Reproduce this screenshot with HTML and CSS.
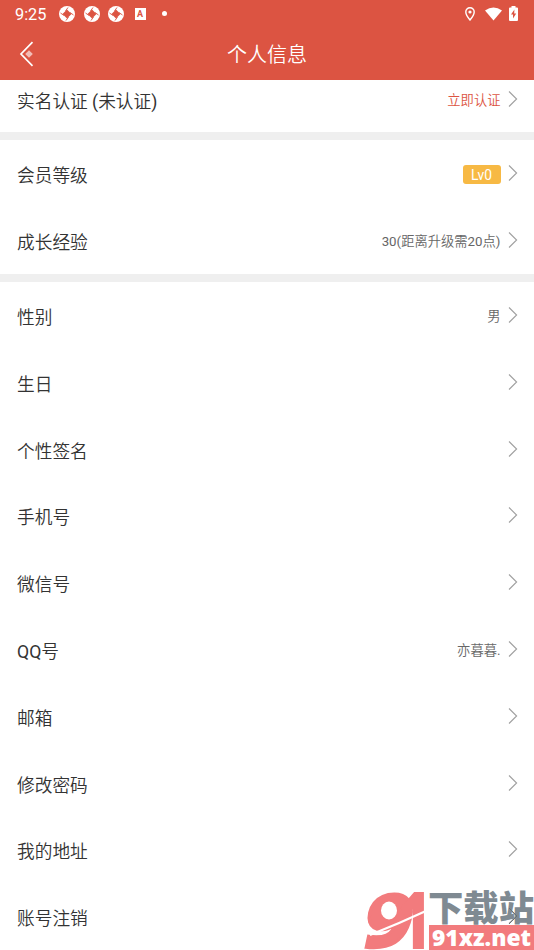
FILE: index.html
```html
<!DOCTYPE html>
<html lang="zh-CN">
<head>
<meta charset="utf-8">
<title>个人信息</title>
<link rel="stylesheet" href="styles.css">
</head>
<body>
<svg class="defs" width="0" height="0" aria-hidden="true">
  <symbol id="chevron" viewBox="0 0 10 18"><path d="M1 1.5L8.6 9L1 16.5" fill="none" stroke="currentColor" stroke-width="1.1"/></symbol>
  <symbol id="shutter" viewBox="0 0 16 16"><circle cx="8" cy="8" r="8" fill="#fff"/><path d="M8 3.500L12.500 8L8 12.500L3.500 8Z" fill="#dc5442"/><path d="M6.500 5L9 1.500M11 6.500L14.500 9M9.500 11L7 14.500M5 9.500L1.500 7" stroke="#dc5442" stroke-width=".9"/></symbol>
</svg>
<header class="header">
  <div class="status">
    <span class="time">9:25</span>
    <svg class="app"><use href="#shutter"/></svg>
    <svg class="app"><use href="#shutter"/></svg>
    <svg class="app"><use href="#shutter"/></svg>
    <span class="letter">A</span>
    <span class="dot"></span>
    <span class="spacer"></span>
    <svg class="pin" width="10" height="14" viewBox="0 0 10 14"><path d="M5 .8C2.500 .8 .8 2.600 .8 5c0 3 4.200 8 4.200 8s4.200-5 4.200-8C9.200 2.600 7.500 .8 5 .8Z" fill="none" stroke="#fff" stroke-width="1.400"/><circle cx="5" cy="5" r="1.600" fill="#fff"/></svg>
    <svg class="wifi" width="17" height="14" viewBox="0 0 18 14"><path d="M0 3.300Q9-3.300 18 3.300L9 14Z" fill="#fff"/></svg>
    <svg class="battery" width="9" height="15" viewBox="0 0 9 15"><path d="M2.500 0h4v1.500H8q1 0 1 1V14q0 1-1 1H1q-1 0-1-1V2.500q0-1 1-1h1.500Z" fill="#fff"/><path d="M5.400 3.500L2 8.600h2v4L7.200 7.500h-2Z" fill="#dc5442"/></svg>
  </div>
  <div class="nav">
    <svg class="back" width="16" height="26" viewBox="0 0 16 26"><path d="M13.500 1.200L2 13L13.500 24.800" fill="none" stroke="#fff" stroke-width="1.700"/><path d="M10 9.200L13.800 13L10 16.800L6.200 13Z" fill="#f2bdb7"/></svg>
    <h1>个人信息</h1>
  </div>
</header>
<main>
  <section>
    <div class="row"><span class="label">实名认证 <b>(</b>未认证<b>)</b></span><span class="value action">立即认证</span><svg class="chev"><use href="#chevron"/></svg></div>
  </section>
  <section>
    <div class="row"><span class="label">会员等级</span><span class="level">Lv0</span><svg class="chev"><use href="#chevron"/></svg></div>
    <div class="row"><span class="label">成长经验</span><span class="value"><b>30(</b>距离升级需<b>20</b>点<b>)</b></span><svg class="chev"><use href="#chevron"/></svg></div>
  </section>
  <section>
    <div class="row"><span class="label">性别</span><span class="value">男</span><svg class="chev"><use href="#chevron"/></svg></div>
    <div class="row"><span class="label">生日</span><svg class="chev"><use href="#chevron"/></svg></div>
    <div class="row"><span class="label">个性签名</span><svg class="chev"><use href="#chevron"/></svg></div>
    <div class="row"><span class="label">手机号</span><svg class="chev"><use href="#chevron"/></svg></div>
    <div class="row"><span class="label">微信号</span><svg class="chev"><use href="#chevron"/></svg></div>
    <div class="row"><span class="label"><b>QQ</b>号</span><span class="value">亦暮暮<b>.</b></span><svg class="chev"><use href="#chevron"/></svg></div>
    <div class="row"><span class="label">邮箱</span><svg class="chev"><use href="#chevron"/></svg></div>
    <div class="row"><span class="label">修改密码</span><svg class="chev"><use href="#chevron"/></svg></div>
    <div class="row"><span class="label">我的地址</span><svg class="chev"><use href="#chevron"/></svg></div>
    <div class="row"><span class="label">账号注销</span><svg class="chev"><use href="#chevron"/></svg></div>
  </section>
</main>
<svg class="watermark" width="172" height="62" viewBox="0 0 172 62">
  <g class="mark">
    <text class="nine" transform="translate(-2 59) skewX(-12)" font-size="73" textLength="47" lengthAdjust="spacingAndGlyphs">9</text>
    <text x="36" y="60.500" font-size="79" textLength="33" lengthAdjust="spacingAndGlyphs">1</text>
  </g>
  <ellipse cx="27" cy="22.500" rx="8" ry="9" fill="#fff"/>
  <path d="M8 47Q36 36 65 22.500" fill="none" stroke="#fff" stroke-width="2.200"/>
  <text class="site" x="66" y="33" textLength="106" lengthAdjust="spacingAndGlyphs">下载站</text>
  <path d="M147 20L155 28L147 36" fill="none" stroke="#6b7277" stroke-width="1"/>
  <rect x="67" y="37" width="105" height="25" fill="#f27b7d"/>
  <text class="domain" x="70" y="57.500" textLength="99" lengthAdjust="spacingAndGlyphs">91xz.net</text>
</svg>
</body>
</html>
```
FILE: styles.css
```css
* { box-sizing: border-box; }
body {
  margin: 0;
  height: 950px;
  overflow: hidden;
  position: relative;
  background: #fff;
  color: #333;
  font-family: Roboto, "Noto Sans CJK SC", sans-serif;
}
.defs { position: absolute; }
.header {
  position: relative;
  z-index: 1;
  height: 80px;
  background: #dc5442;
  color: #fff;
}
.status {
  display: flex;
  align-items: center;
  height: 27px;
  padding: 0 16px 0 15px;
}
.time { width: 44px; font-size: 16.300px; line-height: 27px; padding-top: 1px; }
.app { width: 16px; height: 16px; margin-right: 8.500px; }
.letter {
  width: 11px;
  height: 12px;
  margin-left: 2px;
  background: #fff;
  color: #dc5442;
  font-size: 9px;
  font-weight: 700;
  line-height: 12px;
  text-align: center;
}
.dot { width: 5px; height: 5px; margin-left: 16px; border-radius: 50%; background: #fff; }
.spacer { flex: 1; }
.wifi { margin: 0 7px 0 10px; }
.nav { display: grid; grid-template-columns: 60px 1fr 60px; align-items: center; height: 53px; }
.back { margin-left: 19px; }
h1 { margin: 0; padding-top: 2px; font-size: 20px; font-weight: 350; line-height: 28px; text-align: center; }
main { margin-top: -14.800px; }
section + section { border-top: 8px solid #efefef; }
.row { display: flex; align-items: center; height: 66.800px; padding: 0 16px 0 17px; }
.label { flex: 1; padding-top: 6px; font-size: 17.700px; font-weight: 350; line-height: 26px; }
.value { padding-top: 4px; color: #666; font-size: 13.300px; font-weight: 350; line-height: 20px; }
b { font-weight: 400; }
.action { color: #dc5442; }
.level {
  width: 38px;
  height: 19px;
  margin-top: 2px;
  border-radius: 3px;
  background: #f7b944;
  color: #fff;
  font-size: 13.800px;
  line-height: 20px;
  text-align: center;
}
.chev { width: 10px; height: 18px; margin-left: 7.500px; color: #a0a0a0; }
.watermark { position: absolute; right: 0; bottom: 0; }
.mark { fill: #f27b7d; font-family: "Open Sans", sans-serif; font-weight: 800; }
.nine { stroke: #f27b7d; stroke-width: 3px; }
.site { fill: #7f8a92; font-family: "Noto Sans CJK SC", sans-serif; font-size: 35px; font-weight: 900; }
.domain { fill: #fff; font-family: "Open Sans", sans-serif; font-size: 22px; font-weight: 800; }
```
